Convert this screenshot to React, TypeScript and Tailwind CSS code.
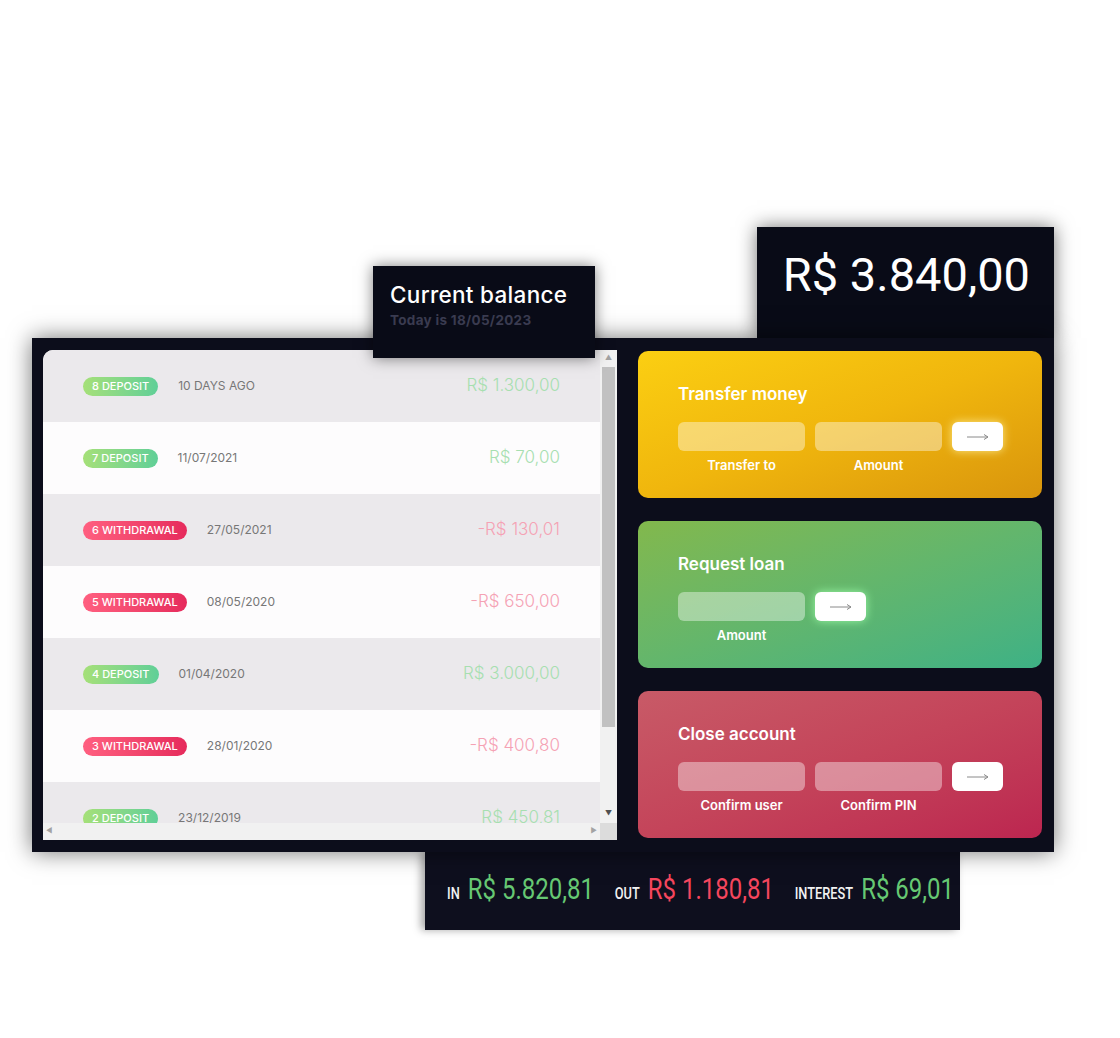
const movements = [
  { n: 8, type: "deposit", date: "10 days ago", value: "R$ 1.300,00" },
  { n: 7, type: "deposit", date: "11/07/2021", value: "R$ 70,00" },
  { n: 6, type: "withdrawal", date: "27/05/2021", value: "-R$ 130,01" },
  { n: 5, type: "withdrawal", date: "08/05/2020", value: "-R$ 650,00" },
  { n: 4, type: "deposit", date: "01/04/2020", value: "R$ 3.000,00" },
  { n: 3, type: "withdrawal", date: "28/01/2020", value: "-R$ 400,80" },
  { n: 2, type: "deposit", date: "23/12/2019", value: "R$ 450,81" },
  { n: 1, type: "deposit", date: "12/11/2019", value: "R$ 200,00" },
];

const sans = "font-['Inter','Noto_Sans',sans-serif]";

const Movement = ({ m, i }: { m: (typeof movements)[number]; i: number }) => {
  const dep = m.type === "deposit";
  return (
    <div
      className={`flex items-center h-[72px] shrink-0 px-10 ${
        i % 2 === 0 ? "bg-[#ebe9ec]" : "bg-[#fdfcfd]"
      }`}
    >
      <span
        className={`h-[19px] leading-[19px] px-[9px] rounded-full text-[11px] font-medium text-white uppercase mr-5 whitespace-nowrap ${
          dep
            ? "bg-gradient-to-r from-[#a5e078] to-[#5fcf97]"
            : "bg-gradient-to-r from-[#ff5f80] to-[#e62a5c]"
        }`}
      >
        {m.n} {m.type}
      </span>
      <span className="text-[12px] text-[#777] uppercase">{m.date}</span>
      <span
        className={`ml-auto text-[17px] font-light ${
          dep ? "text-[#a7dfb0]" : "text-[#f5a2b4]"
        }`}
      >
        {m.value}
      </span>
    </div>
  );
};

const ArrowBtn = ({ glow }: { glow: string }) => (
  <button className={`h-[29px] rounded-[6px] bg-white flex items-center justify-center ${glow}`}>
    <svg width="22" height="8" viewBox="0 0 22 8" fill="none" stroke="#8a8a8a" strokeWidth="1">
      <path d="M0 4h21M17 1.5l4 2.5-4 2.5" />
    </svg>
  </button>
);

const OpCard = ({
  title,
  grad,
  glow,
  cols,
  labels,
}: {
  title: string;
  grad: string;
  glow: string;
  cols: string;
  labels: string[];
}) => (
  <div className={`h-[147px] rounded-[10px] pt-[33px] px-10 ${grad}`}>
    <h2 className="text-[17px] font-semibold text-white mb-[18px] leading-[20px]">{title}</h2>
    <div className={`grid gap-x-[10px] gap-y-[6px] ${cols}`}>
      {labels.map((l) => (
        <div key={l} className="h-[29px] rounded-[6px] bg-white/40" />
      ))}
      <ArrowBtn glow={glow} />
      {labels.map((l) => (
        <div key={l + "l"} className="text-center text-[13px] font-semibold text-white leading-[17px]">
          {l}
        </div>
      ))}
    </div>
  </div>
);

const Stat = ({ label, value, color }: { label: string; value: string; color: string }) => (
  <p className="flex items-baseline gap-[10px]">
    <span className="text-[16px] font-medium text-[#f2f2f2] uppercase">{label}</span>
    <span className={`text-[30px] ${color}`}>{value}</span>
  </p>
);

export default function App() {
  return (
    <div className={`min-h-[1038px] bg-white pt-[227px] pl-[32px] ${sans}`}>
      <div className="w-[1022px] relative">
        <div className="flex justify-end">
          <div className="w-[297px] h-[111px] bg-[#090b17] shadow-[0_0_18px_rgba(0,0,0,0.55)] pt-[21px] pr-[24px] text-right">
            <span className="font-['Roboto',sans-serif] text-[47px] leading-[54px] text-white whitespace-nowrap">
              R$ 3.840,00
            </span>
          </div>
        </div>

        <main className="relative bg-[#0c0d1b] shadow-[0_0_22px_rgba(0,0,0,0.55)] pt-[12px] pb-[12px] pl-[11px] pr-[12px] grid grid-cols-[574px_404px] gap-x-[21px]">
          <div className="relative h-[490px] rounded-tl-[10px] overflow-hidden bg-[#f1f0f1]">
            <div className="flex flex-col h-[473px] w-[557px] overflow-hidden">
              {movements.map((m, i) => (
                <Movement key={m.n} m={m} i={i} />
              ))}
            </div>
            {/* vertical scrollbar */}
            <div className="absolute top-0 right-0 w-[17px] h-[473px] bg-[#f1f1f1] flex flex-col items-center">
              <div className="h-[17px] flex items-center justify-center text-[7px] text-[#a3a3a3]">▲</div>
              <div className="w-[13px] h-[360px] bg-[#c1c1c1]" />
              <div className="flex-1" />
              <div className="h-[17px] flex items-center justify-center text-[7px] text-[#505050]">▼</div>
            </div>
            {/* horizontal scrollbar */}
            <div className="absolute bottom-0 left-0 w-[557px] h-[17px] bg-[#f1f1f1] flex items-center justify-between px-[3px] text-[7px] text-[#a3a3a3]">
              <span>◀</span>
              <span>▶</span>
            </div>
            <div className="absolute bottom-0 right-0 w-[17px] h-[17px] bg-[#dcdcdc]" />
          </div>

          <div className="flex flex-col gap-[23px] pt-px">
            <OpCard
              title="Transfer money"
              grad="bg-gradient-to-br from-[#fbcf12] via-[#f0b60d] to-[#d9950d]"
              glow="shadow-[0_0_10px_rgba(255,240,150,0.9)]"
              cols="grid-cols-[127px_127px_51px]"
              labels={["Transfer to", "Amount"]}
            />
            <OpCard
              title="Request loan"
              grad="bg-gradient-to-br from-[#82b84c] via-[#63b66c] to-[#3db185]"
              glow="shadow-[0_0_10px_rgba(160,255,170,0.9)]"
              cols="grid-cols-[127px_51px]"
              labels={["Amount"]}
            />
            <OpCard
              title="Close account"
              grad="bg-gradient-to-br from-[#c85a67] via-[#c4445a] to-[#bc2550]"
              glow=""
              cols="grid-cols-[127px_127px_51px]"
              labels={["Confirm user", "Confirm PIN"]}
            />
          </div>

          <div className="absolute left-[341px] top-[-72px] w-[222px] h-[92px] bg-[#090b17] shadow-[0_0_14px_rgba(0,0,0,0.5)] pl-[17px] pt-[15px]">
            <p className="text-[22.5px] font-medium text-white leading-[28px] tracking-[0.3px] whitespace-nowrap">
              Current balance
            </p>
            <p className="text-[13.5px] font-bold text-[#3a3b50] leading-[22px] tracking-[0.3px] whitespace-nowrap">
              Today is 18/05/2023
            </p>
          </div>
        </main>

        <div className="ml-[393px] w-[535px] h-[78px] bg-[#0e0f1e] shadow-[-4px_0_8px_rgba(0,0,0,0.35)] flex items-center pl-[22px] pb-[4px] whitespace-nowrap overflow-hidden">
          <div className="flex items-baseline gap-[26px] scale-x-[0.8] origin-left font-['Roboto',sans-serif] leading-none">
            <Stat label="In" value="R$ 5.820,81" color="text-[#66c873]" />
            <Stat label="Out" value="R$ 1.180,81" color="text-[#f5465d]" />
            <Stat label="Interest" value="R$ 69,01" color="text-[#66c873]" />
          </div>
        </div>
      </div>
    </div>
  );
}
